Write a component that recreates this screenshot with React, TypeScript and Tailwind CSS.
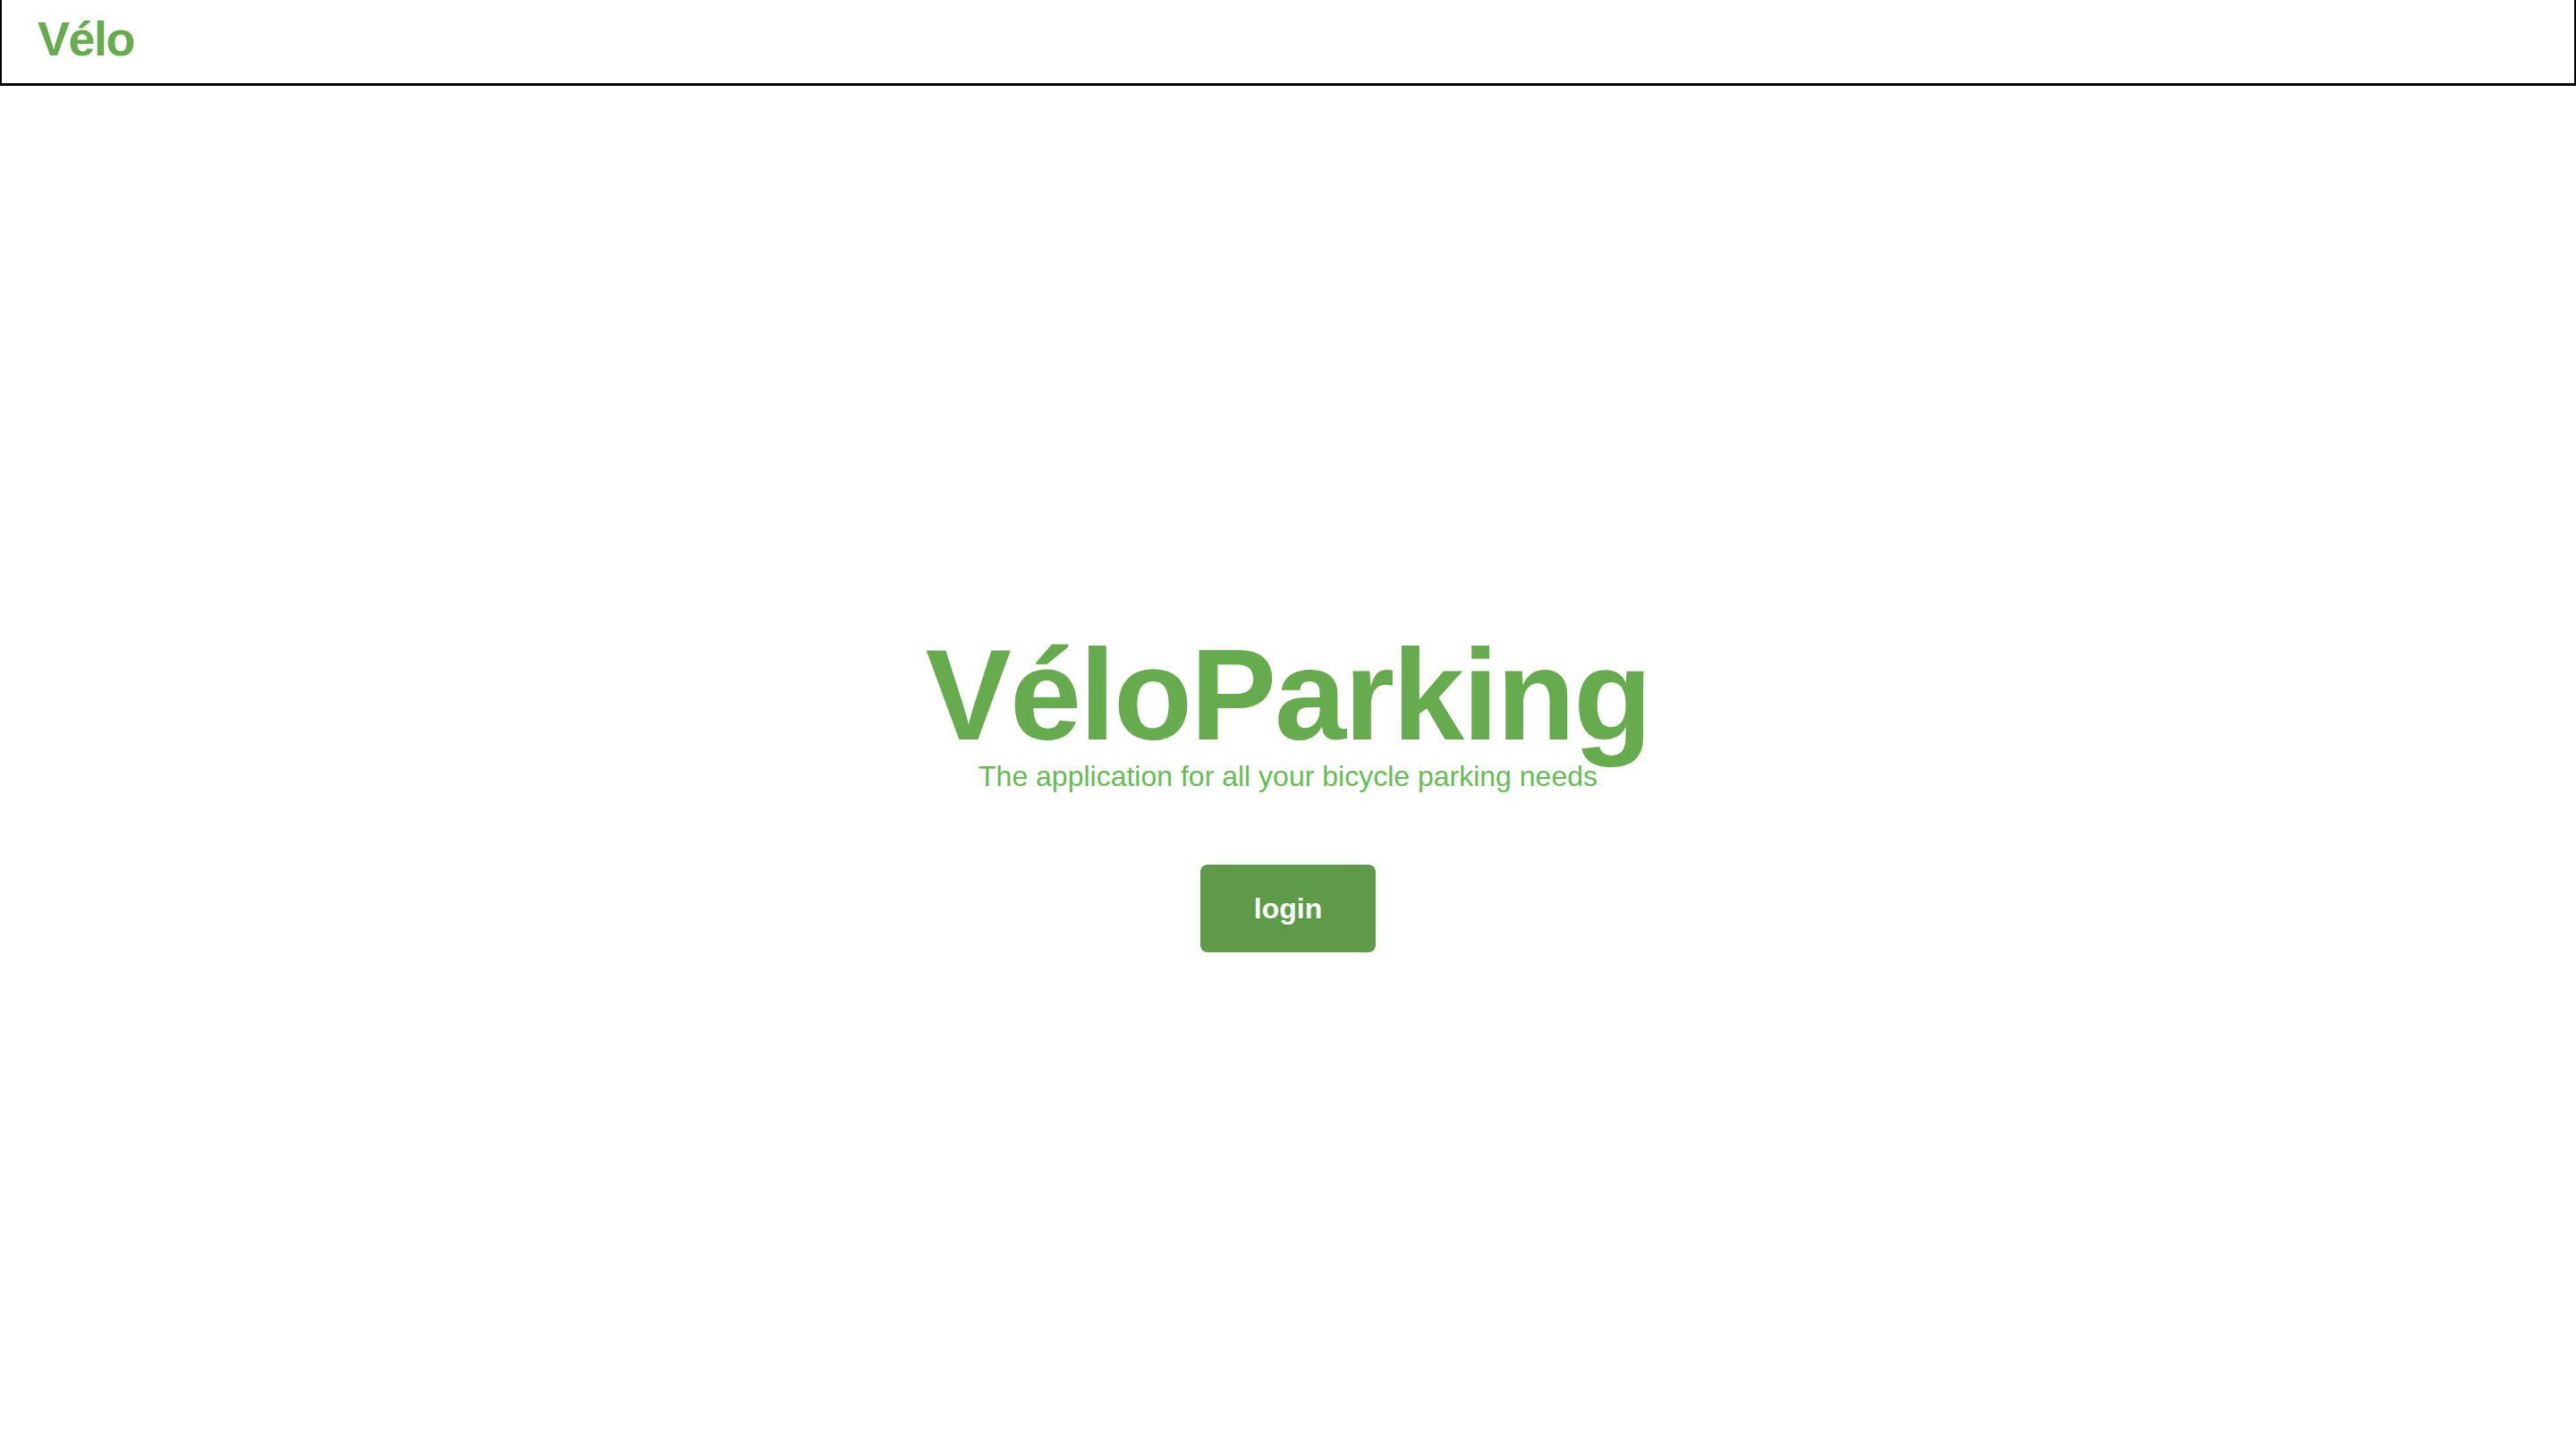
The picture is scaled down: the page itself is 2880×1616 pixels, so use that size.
import React from "react";

export default function App() {
  return (
    <div className="min-h-screen w-full bg-white font-['Liberation_Sans',Arial,sans-serif]">
      <header className="h-[96px] border-x-2 border-b-[3px] border-black bg-white pl-[40px] pt-[12px]">
        <span className="block text-[54px] font-bold leading-[1.15] tracking-[-1.5px] text-[#67ab4f]">Vélo</span>
      </header>
      <main className="flex flex-col items-center pt-[610px]">
        <h1 className="m-0 text-[144px] font-bold leading-none tracking-[-2px] text-[#67ab4f]">VéloParking</h1>
        <p className="m-0 text-[32px] leading-[1.15] text-[#66bb55]">
          The application for all your bicycle parking needs
        </p>
        <button
          type="button"
          className="mt-[80px] flex h-[98px] w-[196px] items-center justify-center rounded-[8px] bg-[#5e9a48] text-[32px] font-bold text-white"
        >
          login
        </button>
      </main>
    </div>
  );
}
